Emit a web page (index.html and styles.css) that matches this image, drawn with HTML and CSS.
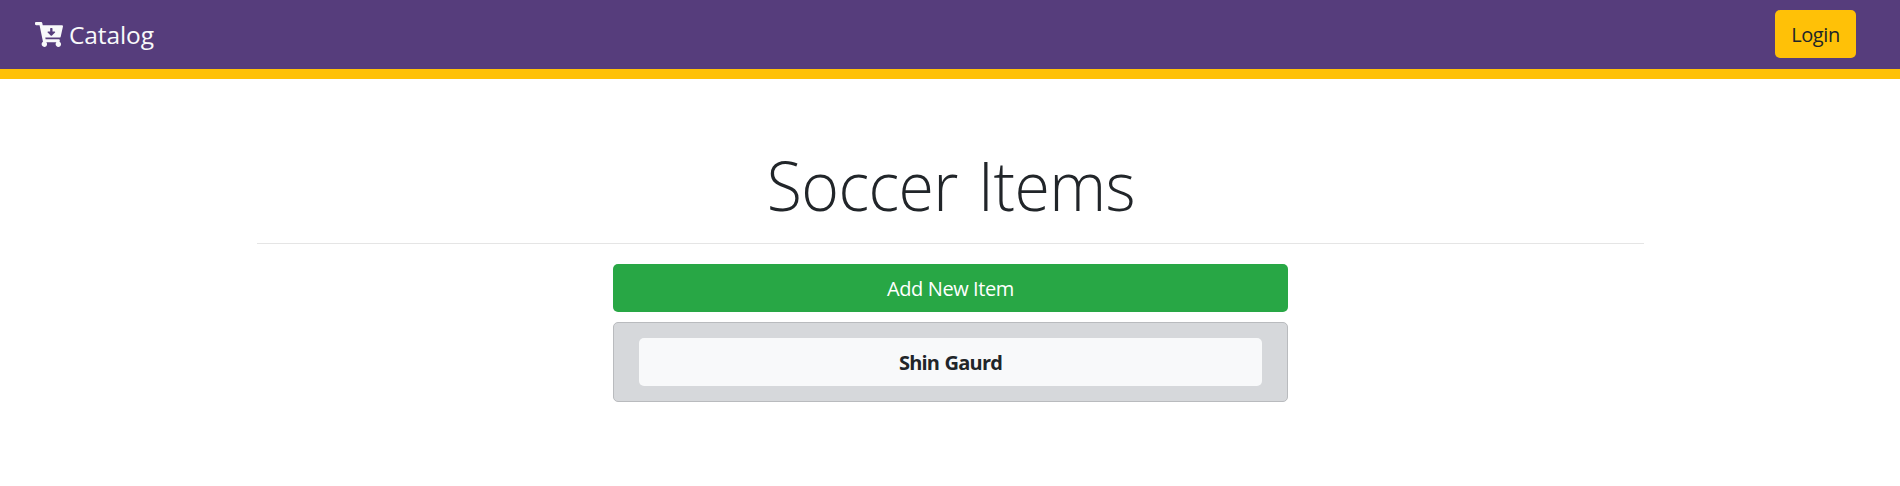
FILE: index.html
```html
<!DOCTYPE html>
<html lang="en">
<head>
<meta charset="utf-8">
<title>Catalog</title>
<link rel="stylesheet" href="styles.css">
</head>
<body>
<nav class="navbar">
  <a class="brand">
    <svg class="cart" viewBox="0 0 576 512" aria-hidden="true"><path fill="currentColor" d="M504.717 320H211.572l6.545 32h268.418c15.401 0 26.816 14.301 23.403 29.319l-5.517 24.276C523.112 414.668 536 433.828 536 456c0 31.202-25.519 56.444-56.824 55.994-29.823-.429-54.35-24.631-55.155-54.447-.44-16.287 6.085-31.049 16.803-41.548H231.176C241.553 426.165 248 440.326 248 456c0 31.813-26.528 57.431-58.67 55.938-28.54-1.325-51.751-24.385-53.251-52.917-1.158-22.034 10.436-41.455 28.051-51.586L93.883 64H24C10.745 64 0 53.255 0 40V24C0 10.745 10.745 0 24 0h102.529c11.401 0 21.228 8.021 23.513 19.19L159.208 64H551.99c15.401 0 26.816 14.301 23.403 29.319l-47.273 208C525.637 312.246 515.923 320 504.717 320zM403.029 192H360v-60c0-6.627-5.373-12-12-12h-24c-6.627 0-12 5.373-12 12v60h-43.029c-10.691 0-16.045 12.926-8.485 20.485l67.029 67.029c4.686 4.686 12.284 4.686 16.971 0l67.029-67.029c7.559-7.559 2.205-20.485-8.486-20.485z"/></svg>
    <span class="brand-name">Catalog</span>
  </a>
  <a class="btn btn-login">Login</a>
</nav>
<main class="container">
  <h1 class="title"><span class="title-text">Soccer Items</span></h1>
  <div class="items">
    <a class="btn btn-add">Add New Item</a>
    <div class="card"><a class="btn btn-item">Shin Gaurd</a></div>
  </div>
</main>
</body>
</html>
```
FILE: styles.css
```css
* { box-sizing: border-box; }
body {
  margin: 0;
  background: #fff;
  color: #212529;
  font-family: "Open Sans", "Noto Sans", sans-serif;
  font-size: 20px;
  line-height: 30px;
}
.navbar {
  display: flex;
  align-items: center;
  justify-content: space-between;
  height: 79px;
  padding: 0 44px 0 35px;
  background: #563d7c;
  border-bottom: 10px solid #ffc107;
}
.brand { display: flex; align-items: center; gap: 6px; color: #f8f9fa; }
.cart { width: 28px; height: 25px; }
.brand-name { font-size: 24.5px; line-height: 38px; letter-spacing: -0.1px; }
.btn {
  display: flex;
  align-items: center;
  justify-content: center;
  height: 48px;
  padding-top: 1px;
  border-radius: 5px;
  white-space: nowrap;
}
.btn-login {
  width: 81px;
  margin-bottom: 1px;
  padding-top: 2px;
  background: #ffc107;
  letter-spacing: -0.4px;
}
.container { width: 1387px; margin: 0 0 0 257px; padding-top: 64px; }
.title {
  margin: 0;
  height: 101px;
  border-bottom: 1px solid #e5e5e5;
  font-size: 68.5px;
  font-weight: 300;
  line-height: 83px;
  letter-spacing: -0.6px;
  word-spacing: 4px;
  text-align: center;
}
.title-text { display: inline-block; transform: scaleX(0.94); }
.items { width: 675px; margin: 20px 0 0 356px; }
.btn-add { padding-top: 2px; background: #28a745; color: #fff; letter-spacing: -0.4px; }
.card {
  height: 80px;
  margin-top: 10px;
  padding: 15px 25px;
  background: #d6d8db;
  border: 1px solid #b9bbbe;
  border-radius: 5px;
}
.btn-item {
  padding-top: 2px;
  background: #f8f9fa;
  font-weight: 700;
  letter-spacing: -0.8px;
  word-spacing: 1px;
}
```
